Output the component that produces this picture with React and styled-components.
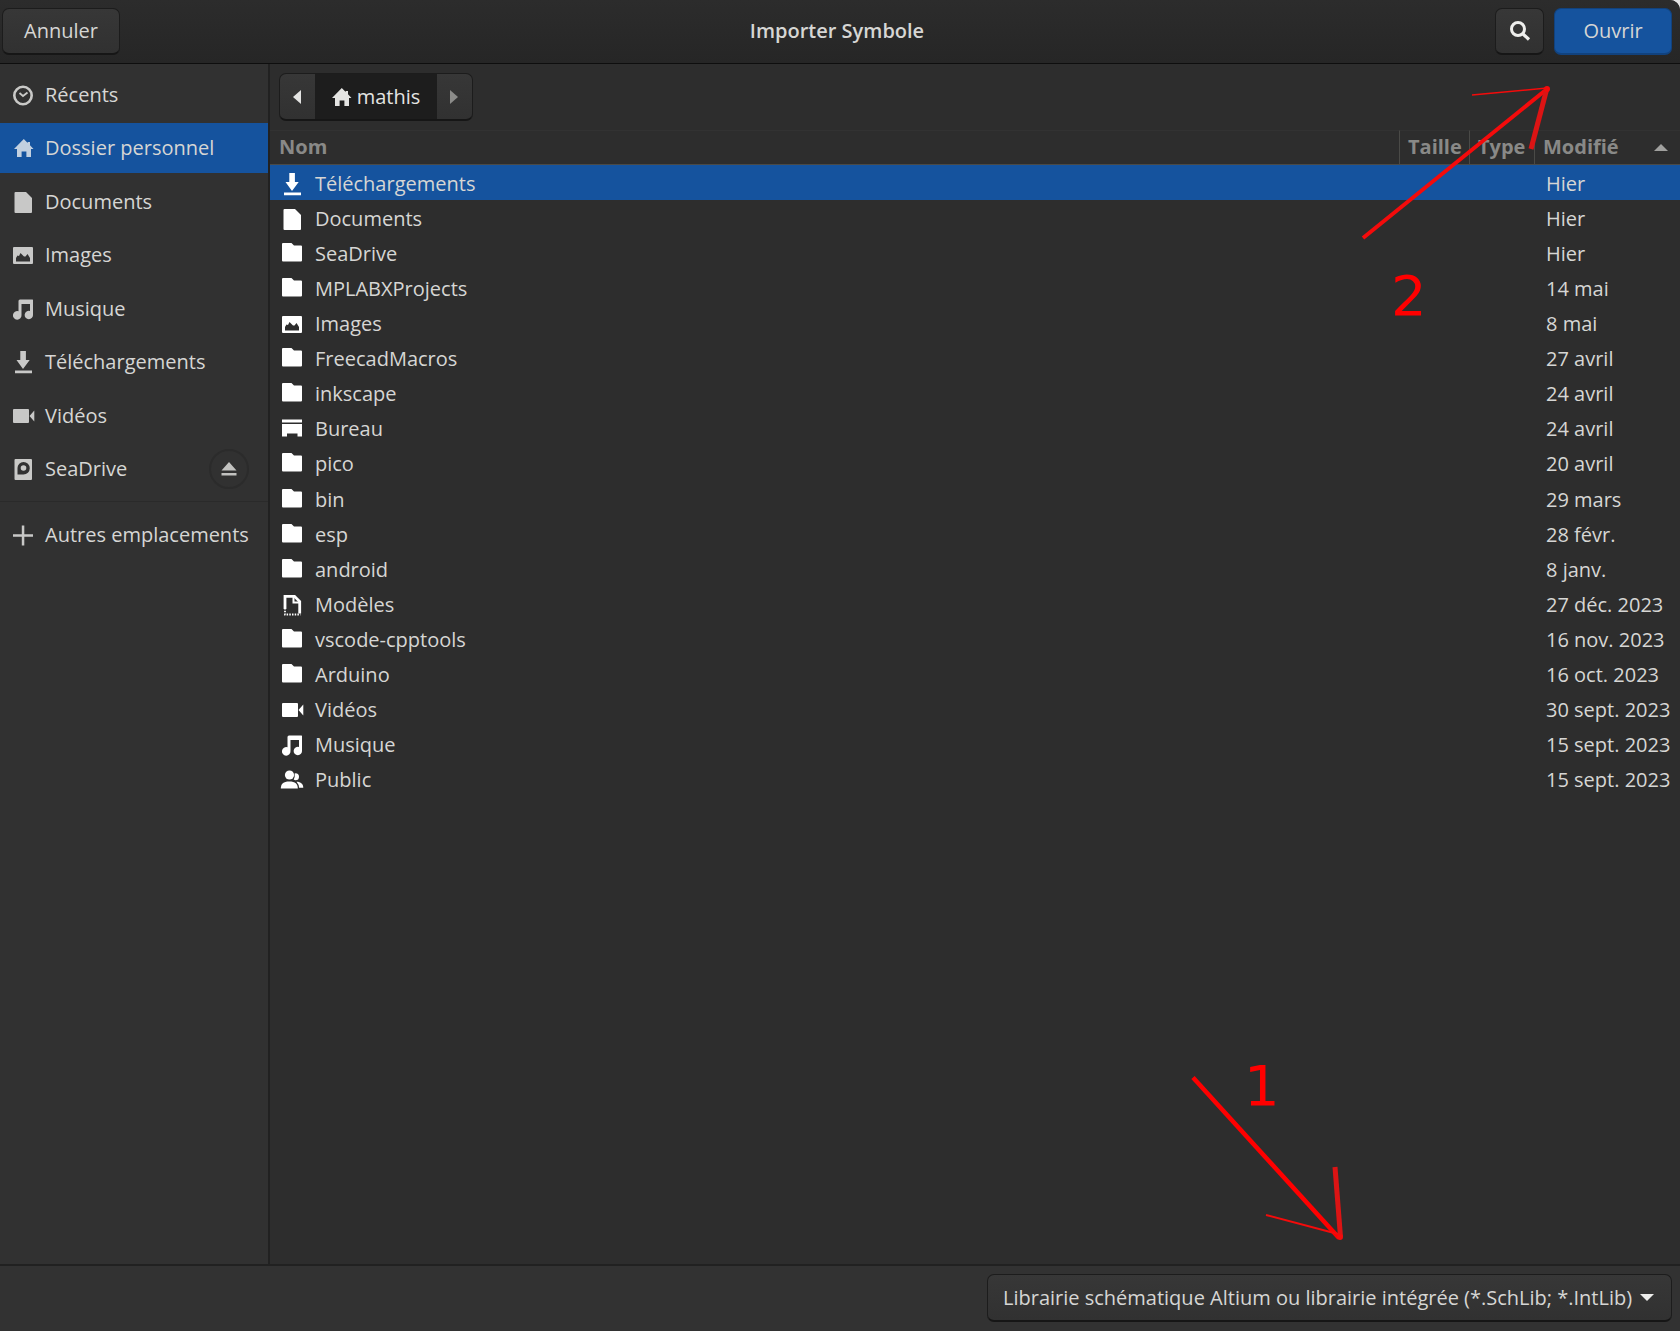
import React from "react";
import styled, { createGlobalStyle, css } from "styled-components";

const GlobalStyle = createGlobalStyle`
  *, *::before, *::after { box-sizing: border-box; }
  body {
    margin: 0;
    background: #e4e4e4;
    color: #d6d6d4;
    font-family: "Open Sans", "Noto Sans", sans-serif;
    font-size: 20px;
    line-height: 28px;
  }
  button, select, a { font: inherit; color: inherit; text-decoration: none; }
`;

const Dialog = styled.div`
  position: relative;
  display: flex;
  flex-direction: column;
  min-height: 100vh;
  overflow: hidden;
  background: #2d2d2d;
  border-top-right-radius: 10px;
`;

const TitleBar = styled.header`
  display: grid;
  grid-template-columns: 1fr auto 1fr;
  align-items: center;
  height: 64px;
  padding: 0 8px 0 2px;
  background: linear-gradient(#2c2c2c, #262626);
  border-bottom: 1px solid #0e0e0e;
`;

const Title = styled.h1`
  margin: 0;
  padding-bottom: 2px;
  font-size: 20px;
  font-weight: 600;
`;

const Actions = styled.div`
  display: flex;
  justify-content: flex-end;
  gap: 10px;
`;

const raised = css`
  background: linear-gradient(#373737, #313131);
  border: 1px solid #1c1c1c;
  border-bottom: 2px solid #161616;
  border-radius: 7px;
`;

const Button = styled.button`
  ${raised}
  display: inline-flex;
  align-items: center;
  justify-content: center;
  justify-self: start;
  width: ${(p) => (p.$square ? 49 : 118)}px;
  height: 47px;
  padding: 0;
  ${(p) =>
    p.$primary &&
    css`
      background: #15539e;
      border-color: #11427e;
    `}
`;

const Body = styled.div`
  display: flex;
  flex: 1;
`;

const Sidebar = styled.nav`
  flex: none;
  width: 270px;
  padding-top: 6px;
  background: #313131;
  border-right: 2px solid #212121;
`;

const Places = styled.ul`
  display: flex;
  flex-direction: column;
  justify-content: space-between;
  height: 424px;
  margin: 0;
  padding: 0;
  list-style: none;
`;

const PlaceItem = styled.li`
  display: flex;
  align-items: center;
  padding-right: 19px;
  background: ${(p) => (p.$selected ? "#15539e" : "transparent")};
`;

const PlaceLink = styled.a`
  display: flex;
  flex: 1;
  align-items: center;
  gap: 11px;
  height: 50px;
  padding-left: 12px;
  white-space: nowrap;

  svg { opacity: 0.78; color: #f4f4f2; }
`;

const Others = styled.div`
  margin-top: 7px;
  padding-top: 8px;
  border-top: 1px solid #2a2a2a;
`;

const Eject = styled.button`
  display: grid;
  place-items: center;
  width: 40px;
  height: 40px;
  padding: 0;
  background: transparent;
  border: 2px solid #2b2b2b;
  border-radius: 50%;
  color: #c2c2c0;
`;

const Content = styled.main`
  flex: 1;
  min-width: 0;
`;

const PathBar = styled.nav`
  display: flex;
  height: 66px;
  padding: 9px 9px 0;
`;

const PathGroup = styled.div`
  ${raised}
  display: flex;
  height: 48px;
  overflow: hidden;
`;

const PathButton = styled.button`
  display: flex;
  align-items: center;
  justify-content: center;
  gap: 5px;
  width: ${(p) => (p.$current ? 122 : 35)}px;
  padding: 0 2px 0 0;
  border: 0;
  background: ${(p) => (p.$current ? "#1d1d1d" : "transparent")};
  color: ${(p) => (p.$dim ? "#8c8c8a" : "#e4e4e2")};
`;

const FileTable = styled.table`
  width: 100%;
  height: 667px;
  table-layout: fixed;
  border-collapse: separate;
  border-spacing: 0;
`;

const Col = styled.col`
  width: ${(p) => p.$width}px;
`;

const Head = styled.th`
  height: 35px;
  padding: 0 0 1px ${(p) => (p.$first ? 9 : 8)}px;
  border-top: 1px solid #323232;
  border-bottom: 1px solid #4a4a47;
  border-left: ${(p) => (p.$first ? 0 : "1px solid #4a4a47")};
  color: #898987;
  font-weight: 700;
  text-align: left;
`;

const SortButton = styled.button`
  display: flex;
  align-items: center;
  justify-content: space-between;
  width: 100%;
  padding: 0 12px 0 0;
  border: 0;
  background: none;
`;

const FileRow = styled.tr`
  background: ${(p) => (p.$selected ? "#15539e" : "transparent")};
`;

const Cell = styled.td`
  height: 35px;
  padding: 2px 0 0 ${(p) => (p.$name ? 11 : 12)}px;
  white-space: nowrap;
`;

const FileName = styled.span`
  display: flex;
  align-items: center;
  gap: 12px;

  svg { color: #ffffff; }
`;

const Footer = styled.footer`
  display: flex;
  justify-content: flex-end;
  height: 67px;
  padding: 8px 8px 0;
  background: #323232;
  border-top: 2px solid #212121;
`;

const FilterBox = styled.label`
  position: relative;
  display: block;
`;

const FilterSelect = styled.select`
  ${raised}
  appearance: none;
  height: 48px;
  padding: 0 38px 0 15px;
`;

const FilterArrow = styled.svg`
  position: absolute;
  top: 20px;
  right: 18px;
  pointer-events: none;
`;

const Note = styled.svg`
  position: absolute;
  right: ${(p) => p.$right}px;
  ${(p) => (p.$bottom ? `bottom: ${p.$bottom}px;` : `top: ${p.$top}px;`)}
  pointer-events: none;
  stroke: #f40b0b;
  fill: none;

  text {
    fill: #ff0000;
    stroke: none;
    font-family: "DejaVu Sans", sans-serif;
    font-size: 56px;
  }
`;

const shapes = {
  recent: (
    <g fill="none" stroke="currentColor">
      <circle cx="11" cy="11.5" r="8.7" strokeWidth="2.6" />
      <path d="M7.5 9l3.5 3 4.5-3.5" strokeWidth="1.8" />
    </g>
  ),
  home: <path d="M11.8 2L2 12h3v8h4.600v-5.500h4.800V20H19v-8h2.500L18 8.300V5h-2.300v1z" />,
  document: <path d="M3.500 1H14l6 6v14q0 1-1 1H3.500q-1 0-1-1V2q0-1 1-1z" />,
  image: (
    <path
      fillRule="evenodd"
      d="M2 3h18q1 0 1 1v15q0 1-1 1H2q-1 0-1-1V4q0-1 1-1zM4 17.500h14v-3.500l-2.500-4-2 2.500h-1.500L8.500 9l-1.500 3-1.500-.5L4 14z"
    />
  ),
  music: (
    <path d="M8 1.500h12.500q.5 0 .5.500v14.500a4.200 4.200 0 1 1-3-3.500V6H9.500v11a4.300 4.300 0 1 1-3-3.700V3q0-1.500 1.500-1.500z" />
  ),
  download: <path d="M8.300 0h5.600v9h3.800L11 18 4.500 9h3.800zM3 19.500h17v2.800H3z" />,
  video: <path d="M2 4h14q1 0 1 1v12q0 1-1 1H2q-1 0-1-1V5q0-1 1-1zM17.500 11L22.300 5.500v11z" />,
  drive: (
    <>
      <path
        fillRule="evenodd"
        d="M3.500 1h15.500q1 0 1 1v19q0 1-1 1H3.500q-1 0-1-1V2q0-1 1-1zM11.500 4a6 6 0 0 0-6 6v6.500h6a6.200 6.200 0 0 0 0-12.500z"
      />
      <circle cx="11.500" cy="10" r="2.800" />
    </>
  ),
  plus: <path d="M9.800 1.500h2.500v8.700H21v2.500h-8.700v8.800H9.800v-8.800H1v-2.500h8.800z" />,
  folder: <path d="M2 0h8.500l2.500 2.500h7q1 0 1 1V17.500q0 1-1 1H2q-1 0-1-1V1q0-1 1-1z" />,
  desktop: <path d="M1 1.500h20v3H1zM1 6h20v12.500h-4.500v-3h-10.500v3H1z" />,
  template: (
    <g fill="none" stroke="currentColor">
      <path d="M4 15V2.300h9.500l5.200 5.200V19.500" strokeWidth="2.800" />
      <path d="M12.500 3v5.500h6" strokeWidth="2" />
      <path d="M4 14v6.500h15.500" strokeWidth="1.800" strokeDasharray="1.500 1.200" />
    </g>
  ),
  people: (
    <>
      <circle cx="8.500" cy="6" r="4.600" />
      <path d="M-.2 19.500c0-4.500 2.500-7 8.500-7s8.500 2.500 8.500 7z" />
      <path d="M14.500 4.200a3.500 3.500 0 1 1 0 7q-1-.1-1.800-.8 1.500-2.500.9-6zM15.500 12.700c4.500 0 6.800 2.500 6.800 6h-4.200q-.3-3.500-2.600-6z" />
    </>
  ),
};

function Icon({ name, size = 22 }) {
  return (
    <svg width={size} height={size} viewBox="0 0 22 22" fill="currentColor" overflow="visible" aria-hidden="true">
      {shapes[name]}
    </svg>
  );
}

const places = [
  ["recent", "Récents"],
  ["home", "Dossier personnel"],
  ["document", "Documents"],
  ["image", "Images"],
  ["music", "Musique"],
  ["download", "Téléchargements"],
  ["video", "Vidéos"],
  ["drive", "SeaDrive"],
];

const files = [
  ["download", "Téléchargements", "Hier"],
  ["document", "Documents", "Hier"],
  ["folder", "SeaDrive", "Hier"],
  ["folder", "MPLABXProjects", "14 mai"],
  ["image", "Images", "8 mai"],
  ["folder", "FreecadMacros", "27 avril"],
  ["folder", "inkscape", "24 avril"],
  ["desktop", "Bureau", "24 avril"],
  ["folder", "pico", "20 avril"],
  ["folder", "bin", "29 mars"],
  ["folder", "esp", "28 févr."],
  ["folder", "android", "8 janv."],
  ["template", "Modèles", "27 déc. 2023"],
  ["folder", "vscode-cpptools", "16 nov. 2023"],
  ["folder", "Arduino", "16 oct. 2023"],
  ["video", "Vidéos", "30 sept. 2023"],
  ["music", "Musique", "15 sept. 2023"],
  ["people", "Public", "15 sept. 2023"],
];

export default function App() {
  return (
    <>
      <GlobalStyle />
      <Dialog role="dialog" aria-labelledby="dialog-title">
        <TitleBar>
          <Button type="button">Annuler</Button>
          <Title id="dialog-title">Importer Symbole</Title>
          <Actions>
            <Button type="button" $square aria-label="Rechercher">
              <svg width="22" height="22" viewBox="0 0 22 22" fill="none" stroke="#eeeeec" aria-hidden="true">
                <circle cx="9" cy="9" r="6.500" strokeWidth="3" />
                <path d="M13.500 13.500l6.500 6" strokeWidth="3.200" />
              </svg>
            </Button>
            <Button type="button" $primary>Ouvrir</Button>
          </Actions>
        </TitleBar>

        <Body>
          <Sidebar aria-label="Emplacements">
            <Places>
              {places.map(([icon, label]) => (
                <PlaceItem key={label} $selected={icon === "home"}>
                  <PlaceLink href="#">
                    <Icon name={icon} />
                    {label}
                  </PlaceLink>
                  {icon === "drive" && (
                    <Eject type="button" aria-label="Éjecter">
                      <svg width="16" height="14" viewBox="0 0 16 14" fill="currentColor" aria-hidden="true">
                        <path d="M8 0l7.500 8.500H.500zM.500 11h15v2.500H.500z" />
                      </svg>
                    </Eject>
                  )}
                </PlaceItem>
              ))}
            </Places>
            <Others>
              <PlaceLink href="#">
                <Icon name="plus" />
                Autres emplacements
              </PlaceLink>
            </Others>
          </Sidebar>

          <Content>
            <PathBar aria-label="Chemin">
              <PathGroup>
                <PathButton type="button" aria-label="Précédent">
                  <svg width="8" height="14" viewBox="0 0 8 14" fill="currentColor" aria-hidden="true">
                    <path d="M8 0v14L0 7z" />
                  </svg>
                </PathButton>
                <PathButton type="button" $current>
                  <Icon name="home" />
                  mathis
                </PathButton>
                <PathButton type="button" $dim aria-label="Suivant">
                  <svg width="8" height="14" viewBox="0 0 8 14" fill="currentColor" aria-hidden="true">
                    <path d="M0 0v14l8-7z" />
                  </svg>
                </PathButton>
              </PathGroup>
            </PathBar>

            <FileTable>
              <colgroup>
                <col />
                <Col $width={70} />
                <Col $width={65} />
                <Col $width={146} />
              </colgroup>
              <thead>
                <tr>
                  <Head $first>Nom</Head>
                  <Head>Taille</Head>
                  <Head>Type</Head>
                  <Head aria-sort="ascending">
                    <SortButton type="button">
                      Modifié
                      <svg width="14" height="7" viewBox="0 0 14 7" fill="#a0a09e" aria-hidden="true">
                        <path d="M7 0l7 7H0z" />
                      </svg>
                    </SortButton>
                  </Head>
                </tr>
              </thead>
              <tbody>
                {files.map(([icon, name, date], i) => (
                  <FileRow key={name} $selected={i === 0}>
                    <Cell $name>
                      <FileName>
                        <Icon name={icon} />
                        {name}
                      </FileName>
                    </Cell>
                    <Cell />
                    <Cell />
                    <Cell>{date}</Cell>
                  </FileRow>
                ))}
              </tbody>
            </FileTable>
          </Content>
        </Body>

        <Footer>
          <FilterBox>
            <FilterSelect aria-label="Type de fichier">
              <option>Librairie schématique Altium ou librairie intégrée (*.SchLib; *.IntLib)</option>
            </FilterSelect>
            <FilterArrow width="14" height="7" viewBox="0 0 14 7" fill="#eeeeec" aria-hidden="true">
              <path d="M0 0h14L7 7z" />
            </FilterArrow>
          </FilterBox>
        </Footer>

        <Note $right={120} $top={80} width="200" height="250" viewBox="1360 80 200 250">
          <path d="M1363 238L1547 89" strokeWidth="4" />
          <path d="M1472 95l75-7" strokeWidth="1.500" />
          <path d="M1531 149l16-61" strokeWidth="5" stroke="#dc1414" />
          <circle cx="1547" cy="89" r="1.500" strokeWidth="3" />
          <text x="1391" y="315">2</text>
        </Note>
        <Note $right={320} $bottom={81} width="180" height="200" viewBox="1180 1050 180 200">
          <path d="M1193 1077.500L1339 1238" strokeWidth="4.500" stroke="#ff0000" />
          <path d="M1266 1215l72 19" strokeWidth="2" />
          <path d="M1335 1167l5.500 70" strokeWidth="5" stroke="#dc1414" />
          <circle cx="1340" cy="1237" r="1.500" strokeWidth="3" />
          <text x="1244" y="1105">1</text>
        </Note>
      </Dialog>
    </>
  );
}
